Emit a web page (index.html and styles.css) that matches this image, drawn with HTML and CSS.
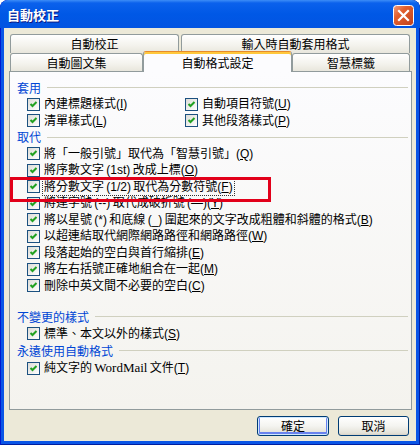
FILE: index.html
```html
<!DOCTYPE html>
<html>
<head>
<meta charset="utf-8">
<link rel="stylesheet" href="styles.css">
</head>
<body>
<div class="window">
  <div class="titlebar">
    <span class="title">自動校正</span>
    <span class="close">
      <svg width="21" height="21" viewBox="0 0 21 21">
        <defs>
          <linearGradient id="cg" x1="0" y1="0" x2="1" y2="1">
            <stop offset="0" stop-color="#F0A080"/>
            <stop offset="0.35" stop-color="#E2602F"/>
            <stop offset="1" stop-color="#C0401A"/>
          </linearGradient>
        </defs>
        <rect x="0.5" y="0.5" width="20" height="20" rx="3" fill="url(#cg)" stroke="#FFFFFF"/>
        <path d="M6 6 L15 15 M15 6 L6 15" stroke="#FFFFFF" stroke-width="2.2" stroke-linecap="square"/>
      </svg>
    </span>
  </div>
  <div class="client">
    <div class="tabs">
      <div class="tabrow row1">
        <div class="tab tw1">自動校正</div>
        <div class="tab tw2">輸入時自動套用格式</div>
      </div>
      <div class="tabrow row2">
        <div class="tab tw3">自動圖文集</div>
        <div class="tab active">自動格式設定</div>
        <div class="tab tw5">智慧標籤</div>
      </div>
    </div>
    <div class="pane">
      <div class="ghead"><span>套用</span></div>
      <div class="cols">
        <div class="opt"><span class="box"><svg width="11" height="11" viewBox="0 0 11 11"><path d="M2.5 5 L4.5 7 L8.5 3" fill="none" stroke="#21A121" stroke-width="2"/></svg></span><span>內建標題樣式(<u>I</u>)</span></div>
        <div class="opt"><span class="box"><svg width="11" height="11" viewBox="0 0 11 11"><path d="M2.5 5 L4.5 7 L8.5 3" fill="none" stroke="#21A121" stroke-width="2"/></svg></span><span>自動項目符號(<u>U</u>)</span></div>
        <div class="opt"><span class="box"><svg width="11" height="11" viewBox="0 0 11 11"><path d="M2.5 5 L4.5 7 L8.5 3" fill="none" stroke="#21A121" stroke-width="2"/></svg></span><span>清單樣式(<u>L</u>)</span></div>
        <div class="opt"><span class="box"><svg width="11" height="11" viewBox="0 0 11 11"><path d="M2.5 5 L4.5 7 L8.5 3" fill="none" stroke="#21A121" stroke-width="2"/></svg></span><span>其他段落樣式(<u>P</u>)</span></div>
      </div>
      <div class="ghead"><span>取代</span></div>
      <div class="opt"><span class="box"><svg width="11" height="11" viewBox="0 0 11 11"><path d="M2.5 5 L4.5 7 L8.5 3" fill="none" stroke="#21A121" stroke-width="2"/></svg></span><span>將「一般引號」取代為「智慧引號」(<u>Q</u>)</span></div>
      <div class="opt"><span class="box"><svg width="11" height="11" viewBox="0 0 11 11"><path d="M2.5 5 L4.5 7 L8.5 3" fill="none" stroke="#21A121" stroke-width="2"/></svg></span><span>將序數文字 (1st) 改成上標(<u>O</u>)</span></div>
      <div class="opt marked"><span class="box"><svg width="11" height="11" viewBox="0 0 11 11"><path d="M2.5 5 L4.5 7 L8.5 3" fill="none" stroke="#21A121" stroke-width="2"/></svg></span><span class="focus">將分數文字 (1/2) 取代為分數符號(<u>F</u>)</span></div>
      <div class="opt"><span class="box"><svg width="11" height="11" viewBox="0 0 11 11"><path d="M2.5 5 L4.5 7 L8.5 3" fill="none" stroke="#21A121" stroke-width="2"/></svg></span><span>將連字號 (--) 取代成破折號 (—)(<u>Y</u>)</span></div>
      <div class="opt"><span class="box"><svg width="11" height="11" viewBox="0 0 11 11"><path d="M2.5 5 L4.5 7 L8.5 3" fill="none" stroke="#21A121" stroke-width="2"/></svg></span><span>將以星號 (*) 和底線 (_) 圍起來的文字改成粗體和斜體的格式(<u>B</u>)</span></div>
      <div class="opt"><span class="box"><svg width="11" height="11" viewBox="0 0 11 11"><path d="M2.5 5 L4.5 7 L8.5 3" fill="none" stroke="#21A121" stroke-width="2"/></svg></span><span>以超連結取代網際網路路徑和網路路徑(<u>W</u>)</span></div>
      <div class="opt"><span class="box"><svg width="11" height="11" viewBox="0 0 11 11"><path d="M2.5 5 L4.5 7 L8.5 3" fill="none" stroke="#21A121" stroke-width="2"/></svg></span><span>段落起始的空白與首行縮排(<u>E</u>)</span></div>
      <div class="opt"><span class="box"><svg width="11" height="11" viewBox="0 0 11 11"><path d="M2.5 5 L4.5 7 L8.5 3" fill="none" stroke="#21A121" stroke-width="2"/></svg></span><span>將左右括號正確地組合在一起(<u>M</u>)</span></div>
      <div class="opt"><span class="box"><svg width="11" height="11" viewBox="0 0 11 11"><path d="M2.5 5 L4.5 7 L8.5 3" fill="none" stroke="#21A121" stroke-width="2"/></svg></span><span>刪除中英文間不必要的空白(<u>C</u>)</span></div>
      <div class="lower">
        <div class="ghead"><span>不變更的樣式</span></div>
        <div class="opt"><span class="box"><svg width="11" height="11" viewBox="0 0 11 11"><path d="M2.5 5 L4.5 7 L8.5 3" fill="none" stroke="#21A121" stroke-width="2"/></svg></span><span>標準、本文以外的樣式(<u>S</u>)</span></div>
        <div class="ghead"><span>永遠使用自動格式</span></div>
        <div class="opt"><span class="box"><svg width="11" height="11" viewBox="0 0 11 11"><path d="M2.5 5 L4.5 7 L8.5 3" fill="none" stroke="#21A121" stroke-width="2"/></svg></span><span>純文字的 <span class="serif">WordMail</span> 文件(<u>T</u>)</span></div>
      </div>
    </div>
    <div class="buttons">
      <button class="btn default">確定</button>
      <button class="btn">取消</button>
    </div>
  </div>
</div>
</body>
</html>
```

FILE: styles.css
```css
* { box-sizing: border-box; }
html, body { margin: 0; padding: 0; }
body {
  width: 420px;
  height: 445px;
  overflow: hidden;
  background: #ffffff;
  font-family: "Liberation Sans", "Noto Sans CJK TC", sans-serif;
  font-size: 12px;
  color: #000000;
}
.window {
  width: 420px;
  height: 445px;
  display: flex;
  flex-direction: column;
  background: #0A55E6;
  border-radius: 8px 8px 0 0;
  overflow: hidden;
  box-shadow: inset 1px 0 #0019CF, inset -1px 0 #001EA0, inset 0 -1px #001EA0;
}
.titlebar {
  height: 28px;
  flex: none;
  display: flex;
  align-items: flex-start;
  background: linear-gradient(#3D8DF7 0, #0B61EC 3px, #0058E6 50%, #0254E2 100%);
  border-radius: 8px 8px 0 0;
}
.title {
  padding: 1px 0 0 7px;
  line-height: 28px;
  font-family: "Noto Sans CJK TC", sans-serif;
  font-weight: bold;
  font-size: 13px;
  color: #ffffff;
  text-shadow: 1px 1px #0A1883;
}
.close {
  margin: 5px 6px 0 auto;
  width: 21px;
  height: 21px;
  display: block;
}
.close svg { display: block; }
.client {
  flex: 1;
  margin: 0 4px 4px 4px;
  background: #ECE9D8;
  display: flex;
  flex-direction: column;
}
.tabs {
  padding: 6px 6px 0 6px;
  flex: none;
}
.tabrow { display: flex; }
.row1 { height: 19px; }
.row2 { height: 18px; }
.tab {
  border: 1px solid #919B9C;
  border-bottom: none;
  border-radius: 3px 3px 0 0;
  background: linear-gradient(#FFFFFF, #F3F2EC 60%, #E8E6DC);
  display: flex;
  align-items: center;
  justify-content: center;
  font-family: "Noto Sans CJK TC", sans-serif;
  line-height: 16px;
  flex: none;
}
.row1 .tab { height: 19px; }
.row2 .tab { height: 18px; }
.tw1 { width: 169px; margin-right: 2px; }
.tw2 { width: 229px; }
.tw3 { width: 133px; }
.tw5 { width: 118px; }
.tab.active {
  width: 149px;
  height: 21px;
  margin-top: -2px;
  position: relative;
  z-index: 2;
  background: #FCFCFE;
  border-top: 1px solid #E68B2C;
  box-shadow: inset 0 2px 0 #FFC83C;
  padding-top: 1px;
}
.pane {
  flex: none;
  height: 339px;
  margin: 0 4px 0 5px;
  border: 1px solid #919B9C;
  background: linear-gradient(#FCFCFE, #F4F3EE);
  padding: 7.5px 3px 0 7px;
}
.ghead {
  display: flex;
  align-items: center;
  height: 16.5px;
  color: #0046D5;
  font-family: "Noto Sans CJK TC", sans-serif;
  line-height: 16px;
}
.ghead::after {
  content: "";
  flex: 1;
  height: 1px;
  margin-left: 6px;
  background: #D0D0BF;
}
.cols {
  display: grid;
  grid-template-columns: 158px 1fr;
}
.opt {
  display: flex;
  align-items: center;
  height: 16.5px;
  padding-left: 10px;
  line-height: 16px;
  white-space: nowrap;
  word-spacing: -1px;
}
.box {
  width: 13px;
  height: 13px;
  flex: none;
  border: 1px solid #1C5180;
  background: linear-gradient(135deg, #DCDCD7, #FFFFFF);
  margin-right: 4px;
  display: flex;
  align-items: center;
  justify-content: center;
}
.box svg { display: block; }
u { text-decoration: underline; }
.marked { position: relative; }
.marked::before {
  content: "";
  position: absolute;
  left: -7px;
  top: -1.5px;
  width: 255px;
  height: 19px;
  border: 3px solid #E2001A;
}
.focus {
  outline: 1px dotted #333333;
  outline-offset: 0;
  padding: 0 1px;
  margin-left: -1px;
}
.lower { margin-top: 14px; }
.lower .ghead, .lower .opt { height: 17.2px; }
.serif { font-family: "Liberation Serif", serif; font-size: 13px; }
.buttons {
  flex: none;
  display: flex;
  justify-content: flex-end;
  gap: 9px;
  padding: 6px 7px 0 0;
}
.btn {
  width: 72px;
  height: 20px;
  padding: 0;
  border: 1px solid #003C74;
  border-radius: 3px;
  background: linear-gradient(#FFFFFF, #F4F4F0 50%, #E3E1D7 90%, #D6D0C5);
  font-family: "Noto Sans CJK TC", sans-serif;
  font-size: 12px;
  line-height: 16px;
  color: #000000;
}
.btn + .btn { width: 71px; }
.btn.default {
  box-shadow: inset 0 0 0 1px #CEE7FF, inset 0 -1px 0 2px #6982EE;
}
```
